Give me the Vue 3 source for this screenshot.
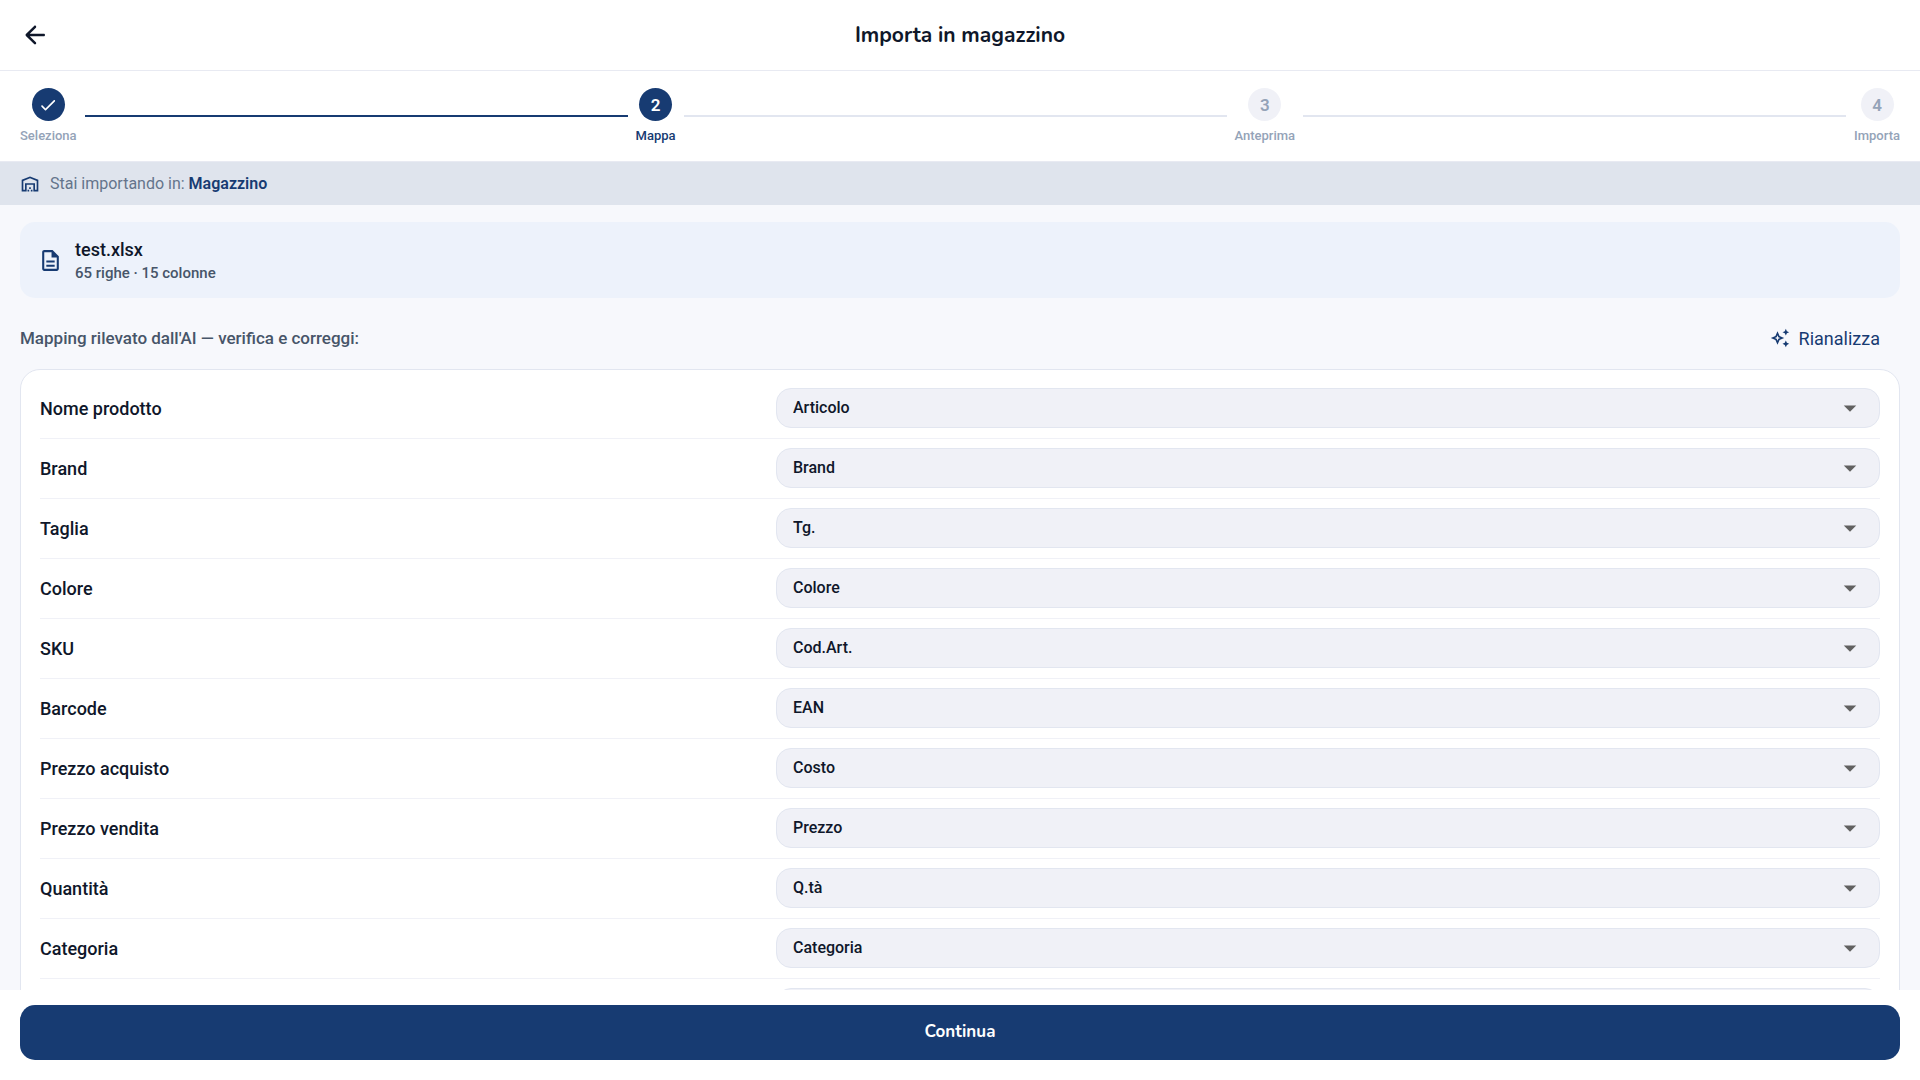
<template>
  <div class="page">
    <header class="app-bar">
      <button class="back" type="button" aria-label="Indietro">
        <svg viewBox="0 0 24 24">
          <path
            d="M19 11H7.83l4.88-4.88c.39-.39.39-1.03 0-1.42-.39-.39-1.02-.39-1.41 0l-6.59 6.59c-.39.39-.39 1.02 0 1.41l6.59 6.59c.39.39 1.02.39 1.41 0 .39-.39.39-1.02 0-1.41L7.83 13H19c.55 0 1-.45 1-1s-.45-1-1-1z"
          />
        </svg>
      </button>
      <h1>Importa in magazzino</h1>
    </header>

    <nav class="stepper">
      <template v-for="(step, index) in steps" :key="step">
        <div v-if="index > 0" class="line" :class="{ filled: index < current }"></div>
        <div class="step" :class="{ done: index + 1 < current, active: index + 1 === current }">
          <span class="circle">
            <svg v-if="index + 1 < current" viewBox="0 0 24 24">
              <path
                d="M9 16.17L5.53 12.7c-.39-.39-1.02-.39-1.41 0-.39.39-.39 1.02 0 1.41l4.18 4.18c.39.39 1.02.39 1.41 0L20.29 7.71c.39-.39.39-1.02 0-1.41-.39-.39-1.02-.39-1.41 0L9 16.17z"
              />
            </svg>
            <template v-else>{{ index + 1 }}</template>
          </span>
          <span class="step-label">{{ step }}</span>
        </div>
      </template>
    </nav>

    <div class="banner">
      <svg viewBox="0 0 24 24">
        <path
          d="M20 8.35V19h-2v-8H6v8H4V8.35l8-3.2 8 3.2zM22 21V7L12 3 2 7v14h6v-8h8v8h6zM11 19H9v2h2v-2zM13 16h-2v2h2v-2zM15 19h-2v2h2v-2z"
        />
      </svg>
      <p>Stai importando in: <strong>Magazzino</strong></p>
    </div>

    <main class="content">
      <section class="file-card">
        <svg viewBox="0 0 24 24">
          <path
            d="M8 16h8v2H8zm0-4h8v2H8zm6-10H6c-1.1 0-2 .9-2 2v16c0 1.1.89 2 1.99 2H18c1.1 0 2-.9 2-2V8l-6-6zm4 18H6V4h7v5h5v11z"
          />
        </svg>
        <div>
          <p class="file-name">test.xlsx</p>
          <p class="file-info">65 righe · 15 colonne</p>
        </div>
      </section>

      <div class="mapping-head">
        <h2>Mapping rilevato dall'AI — verifica e correggi:</h2>
        <button class="retry" type="button">
          <svg viewBox="0 0 24 24">
            <path
              d="M19 9l1.25-2.75L23 5l-2.75-1.25L19 1l-1.25 2.75L15 5l2.75 1.25zM19 15l-1.25 2.75L15 19l2.75 1.25L19 23l1.25-2.75L23 19l-2.75-1.25zM11.5 9.5L9 4 6.5 9.5 1 12l5.5 2.5L9 20l2.5-5.5L17 12l-5.5-2.5zm-1.51 3.49L9 15.17l-.99-2.18L5.83 12l2.18-.99L9 8.83l.99 2.18 2.18.99-2.18.99z"
            />
          </svg>
          Rianalizza
        </button>
      </div>

      <section class="mapping">
        <div v-for="field in fields" :key="field.id" class="row">
          <label :for="field.id">{{ field.label }}</label>
          <div class="select">
            <select :id="field.id" v-model="field.column">
              <option v-for="column in columns" :key="column" :value="column">{{ column }}</option>
            </select>
            <svg viewBox="0 0 24 24"><path d="M7 10l5 5 5-5z" /></svg>
          </div>
        </div>
      </section>
    </main>

    <footer class="actions">
      <button type="button">Continua</button>
    </footer>
  </div>
</template>

<script setup>
import { ref } from 'vue'

const steps = ['Seleziona', 'Mappa', 'Anteprima', 'Importa']
const current = ref(2)

const columns = ['Articolo', 'Brand', 'Tg.', 'Colore', 'Cod.Art.', 'EAN', 'Costo', 'Prezzo', 'Q.tà', 'Categoria', 'Note']

const fields = ref([
  { id: 'name', label: 'Nome prodotto', column: 'Articolo' },
  { id: 'brand', label: 'Brand', column: 'Brand' },
  { id: 'size', label: 'Taglia', column: 'Tg.' },
  { id: 'color', label: 'Colore', column: 'Colore' },
  { id: 'sku', label: 'SKU', column: 'Cod.Art.' },
  { id: 'barcode', label: 'Barcode', column: 'EAN' },
  { id: 'cost', label: 'Prezzo acquisto', column: 'Costo' },
  { id: 'price', label: 'Prezzo vendita', column: 'Prezzo' },
  { id: 'quantity', label: 'Quantità', column: 'Q.tà' },
  { id: 'category', label: 'Categoria', column: 'Categoria' },
  { id: 'notes', label: 'Note', column: 'Note' },
])
</script>

<style>
body {
  margin: 0;
}
</style>

<style scoped>
.page {
  display: flex;
  flex-direction: column;
  height: 100vh;
  background: #f7f8fc;
  color: #0f172a;
  font-family: Roboto, sans-serif;
}

h1,
h2,
p {
  margin: 0;
}

button,
select {
  border: none;
  font-family: inherit;
  cursor: pointer;
}

svg {
  display: block;
  flex: none;
  fill: currentColor;
}

.app-bar {
  display: grid;
  grid-template-columns: 1fr auto 1fr;
  align-items: center;
  height: 70px;
  flex: none;
  padding: 0 20px;
  background: #fff;
  border-bottom: 1px solid #e8eaf2;
}

.back {
  justify-self: start;
  padding: 0;
  background: none;
  color: inherit;
}

.back svg {
  width: 30px;
  height: 30px;
}

.app-bar h1 {
  font-family: Nunito, Lato, sans-serif;
  font-size: 21px;
  font-weight: 700;
  line-height: 30px;
}

.stepper {
  display: flex;
  align-items: center;
  gap: 8px;
  flex: none;
  padding: 17px 20px;
  background: #fff;
  border-bottom: 1px solid #e8eaf2;
}

.step {
  display: flex;
  flex-direction: column;
  align-items: center;
  gap: 7px;
  color: #94a3b8;
}

.circle {
  display: flex;
  align-items: center;
  justify-content: center;
  width: 33px;
  height: 33px;
  border-radius: 50%;
  background: #f0f1f7;
  font-size: 17px;
  font-weight: 600;
}

.circle svg {
  width: 20px;
  height: 20px;
}

.done .circle,
.active .circle {
  background: #173b72;
  color: #fff;
}

.step-label {
  font-size: 13px;
  font-weight: 500;
  line-height: 16px;
}

.active .step-label {
  color: #173b72;
}

.line {
  flex: 1;
  height: 2px;
  background: #e2e6f0;
}

.line.filled {
  background: #173b72;
}

.banner {
  display: flex;
  align-items: center;
  gap: 10px;
  flex: none;
  padding: 12px 20px 11px;
  background: #dfe4ed;
  color: #173b72;
}

.banner svg {
  width: 20px;
  height: 20px;
}

.banner p {
  color: #64748b;
  font-size: 16px;
  line-height: 20px;
}

.banner strong {
  color: #173b72;
  font-weight: 600;
}

.content {
  flex: 1;
  min-height: 0;
  overflow-y: auto;
  padding: 17px 20px 20px;
  scrollbar-width: none;
}

.file-card {
  display: flex;
  align-items: center;
  gap: 12px;
  padding: 15px 18px;
  border-radius: 15px;
  background: #edf2fb;
}

.file-card svg {
  width: 25px;
  height: 25px;
  color: #173b72;
}

.file-name {
  font-size: 18px;
  font-weight: 500;
  line-height: 26px;
}

.file-info {
  color: #475569;
  font-size: 15px;
  font-weight: 500;
  line-height: 20px;
}

.mapping-head {
  display: flex;
  align-items: center;
  justify-content: space-between;
  padding: 20px 20px 11px 0;
}

.mapping-head h2 {
  color: #475569;
  font-size: 17px;
  font-weight: 500;
}

.retry {
  display: flex;
  align-items: center;
  gap: 9px;
  height: 40px;
  padding: 0;
  background: none;
  color: #173b72;
  font-size: 18px;
}

.retry svg {
  width: 20px;
  height: 20px;
}

.mapping {
  padding: 9px 19px;
  border: 1px solid #e2e6f0;
  border-radius: 20px;
  background: #fff;
}

.row {
  display: grid;
  grid-template-columns: 2fr 3fr;
  align-items: center;
  padding: 9px 0 10px;
  border-bottom: 1px solid #f0f1f7;
}

.row label {
  font-size: 18px;
  font-weight: 500;
}

.select {
  position: relative;
}

.select select {
  display: block;
  width: 100%;
  height: 40px;
  padding: 0 48px 2px 16px;
  border: 1px solid #e2e6f0;
  border-radius: 15px;
  appearance: none;
  background: #f0f1f7;
  color: inherit;
  font-size: 16px;
  font-weight: 500;
}

/* arrow sits over the native control */
.select svg {
  position: absolute;
  top: 5px;
  right: 15px;
  width: 30px;
  height: 30px;
  color: #616161;
  pointer-events: none;
}

.actions {
  flex: none;
  padding: 15px 20px 20px;
  background: #fff;
}

.actions button {
  width: 100%;
  height: 55px;
  padding: 0 0 2px;
  border-radius: 15px;
  background: #173b72;
  color: #fff;
  font-family: Nunito, Lato, sans-serif;
  font-size: 17px;
  font-weight: 700;
}
</style>
